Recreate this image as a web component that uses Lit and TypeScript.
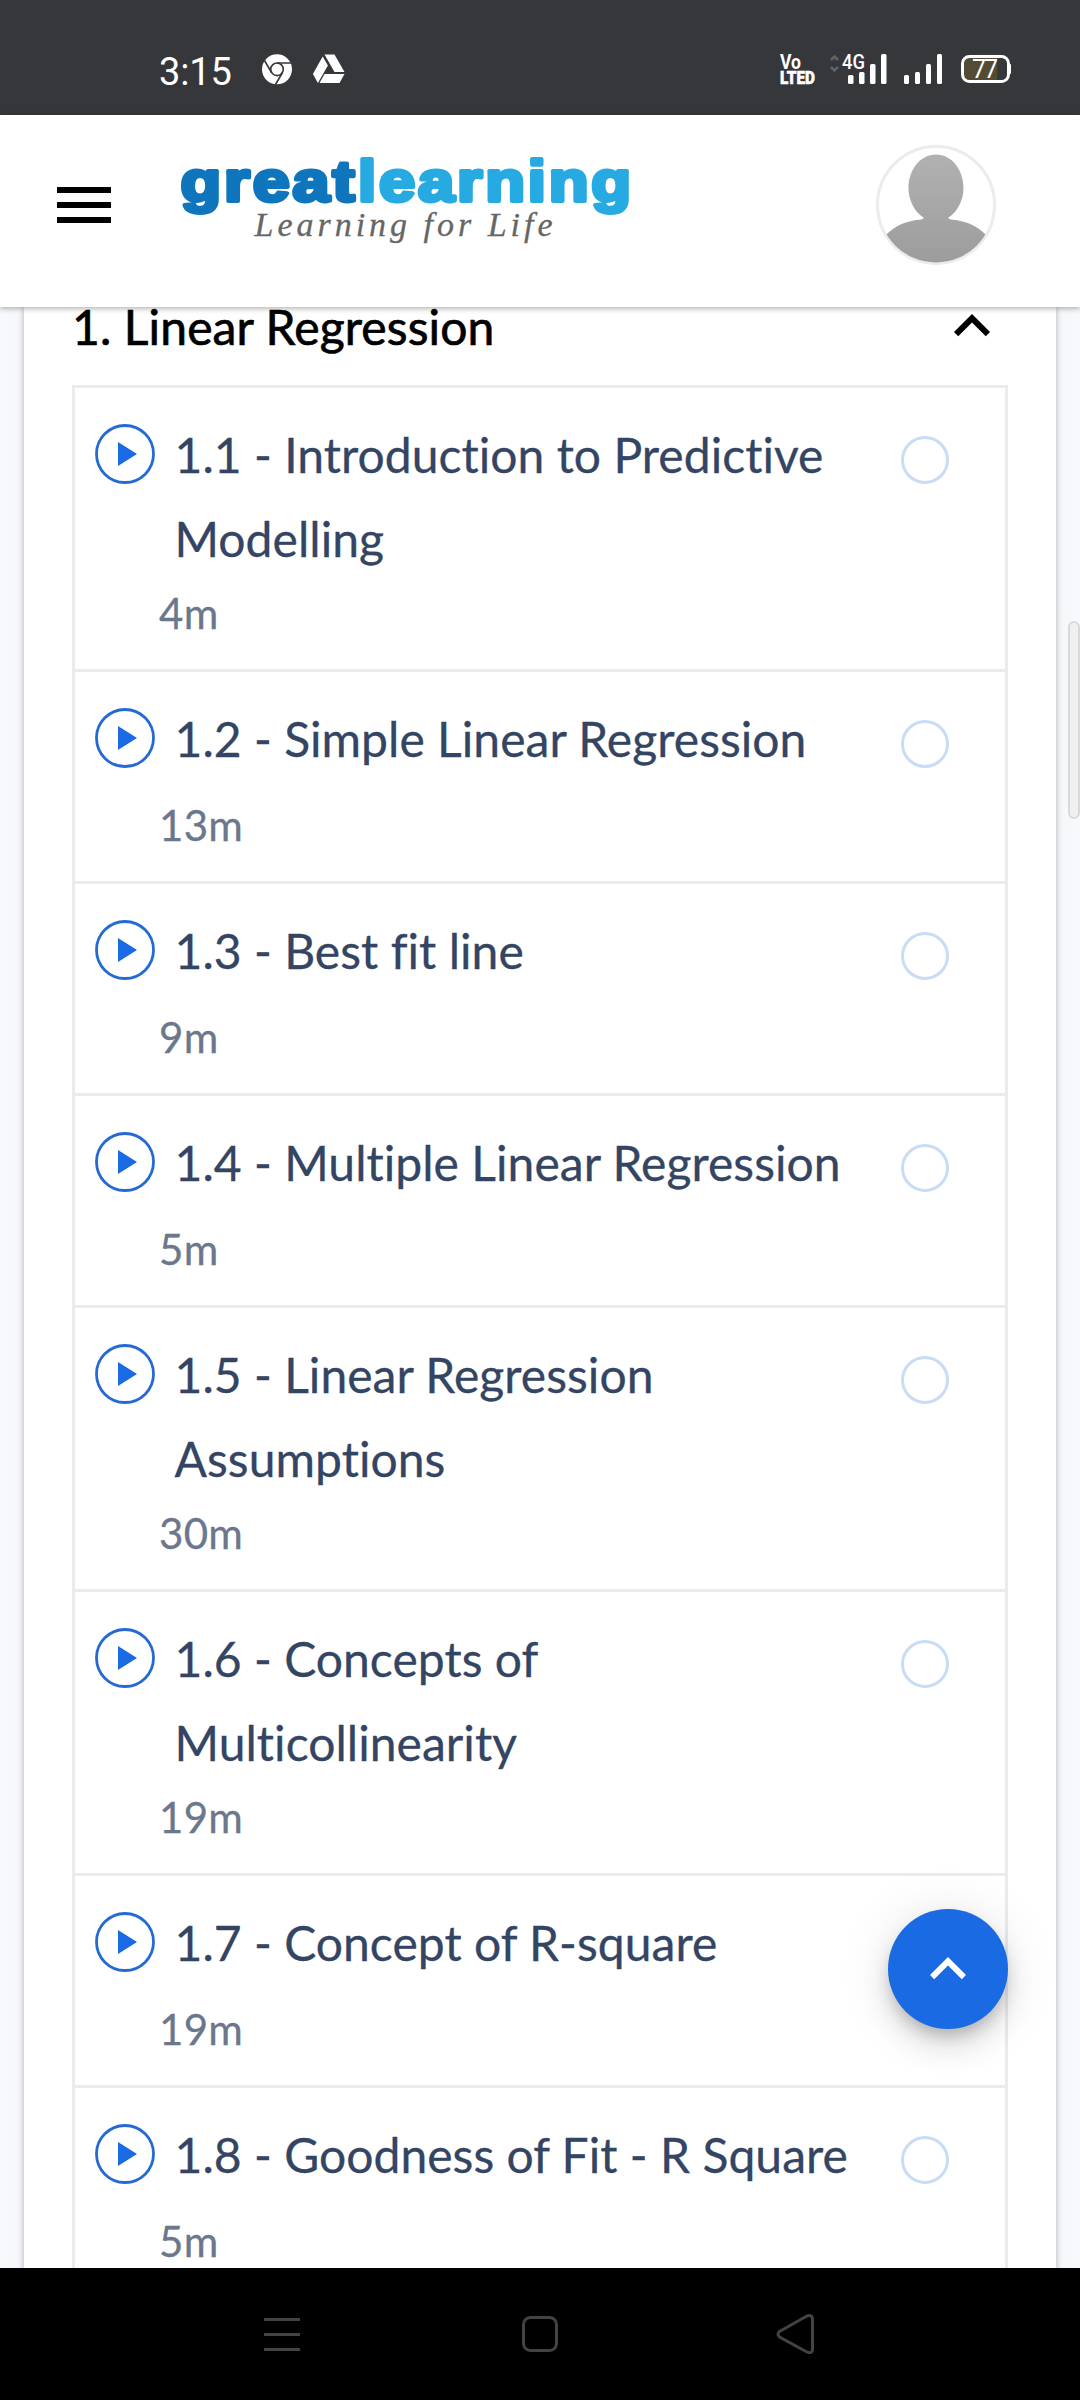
import { LitElement, html, css } from "lit";
import { customElement } from "lit/decorators.js";

interface Lesson {
  title: string;
  time: string;
}

const LESSONS: Lesson[] = [
  { title: "1.1 - Introduction to Predictive Modelling", time: "4m" },
  { title: "1.2 - Simple Linear Regression", time: "13m" },
  { title: "1.3 - Best fit line", time: "9m" },
  { title: "1.4 - Multiple Linear Regression", time: "5m" },
  { title: "1.5 - Linear Regression Assumptions", time: "30m" },
  { title: "1.6 - Concepts of Multicollinearity", time: "19m" },
  { title: "1.7 - Concept of R-square", time: "19m" },
  { title: "1.8 - Goodness of Fit - R Square", time: "5m" },
];

@customElement("status-bar")
class StatusBar extends LitElement {
  static styles = css`
    :host { display: block; height: 115px; background: #36373b; flex: none; }
    svg { display: block; }
    .clock { font: 38px Roboto, sans-serif; letter-spacing: 1.2px; }
    .vo { font: 700 20px Roboto, sans-serif; }
    .lte { font: 900 18px Roboto, sans-serif; stroke: #fff; stroke-width: 0.5; }
    .net { font: 500 21px Roboto, sans-serif; }
    .batt { font: 25px Roboto, sans-serif; }
  `;
  render() {
    return html`<svg width="1080" height="115" viewBox="0 0 1080 115" fill="#fff">
      <text class="clock" x="159" y="84.500" textLength="74">3:15</text>
      <circle cx="277" cy="69.300" r="15" />
      <g fill="none" stroke="#36373b" stroke-width="1.600">
        <circle cx="277" cy="69.300" r="6.300" />
        <path d="M277 63H291M271.500 72.500L264.500 60.500M282.500 72.500L275.500 84.500" />
      </g>
      <path d="M324.500 54.500h10l10 17.500h-10zM322.700 56.500l5.200 9-10 17.500-5-9zM324.500 74h20l-5 9h-20z" />
      <text class="vo" x="780" y="68.500" textLength="21" lengthAdjust="spacingAndGlyphs">Vo</text>
      <text class="lte" x="780" y="84" textLength="35" lengthAdjust="spacingAndGlyphs">LTED</text>
      <path d="M831 60l3.500-3.500 3.500 3.500M831 67l3.500 3.500 3.500-3.500" fill="none" stroke="#616266" stroke-width="2.600" />
      <text class="net" x="842" y="69" textLength="23" lengthAdjust="spacingAndGlyphs">4G</text>
      <g>
        <rect x="848" y="75" width="5.500" height="9" rx="1.500" /><rect x="859" y="72" width="5.500" height="12" rx="1.500" />
        <rect x="870" y="64" width="5.500" height="20" rx="1.500" /><rect x="881" y="54" width="5.500" height="30" rx="1.500" />
        <rect x="904" y="75" width="5" height="9" rx="1.500" /><rect x="915" y="72" width="5" height="12" rx="1.500" />
        <rect x="926" y="64" width="5" height="20" rx="1.500" /><rect x="937" y="54" width="5" height="30" rx="1.500" />
      </g>
      <path d="M968 58h29v22h-29q-4 0-4-5v-12q0-5 4-5z" fill="#544b35" />
      <rect x="962.500" y="56.500" width="46" height="25" rx="7" fill="none" stroke="#fff" stroke-width="3" />
      <rect x="1008" y="64" width="3" height="10" rx="1" />
      <text class="batt" x="972" y="78" textLength="26">77</text>
    </svg>`;
  }
}

@customElement("site-header")
class SiteHeader extends LitElement {
  static styles = css`
    :host {
      display: flex; align-items: flex-start; height: 192px; box-sizing: border-box; flex: none;
      padding: 30px 84px 0 48px; background: #fff; position: relative; z-index: 2;
      box-shadow: 0 2px 5px rgba(0, 0, 0, 0.28);
    }
    .menu { margin-top: 24px; width: 72px; height: 72px; }
    .logo { margin-left: 54px; width: 470px; height: 110px; overflow: visible; }
    .avatar { margin-left: auto; width: 120px; height: 120px; }
    .word { font: 700 58px "Liberation Sans", sans-serif; letter-spacing: 2.5px; stroke-width: 4; stroke-linejoin: round; }
    .great { fill: #0f75bd; stroke: #0f75bd; }
    .learning { fill: #27aae1; stroke: #27aae1; }
    .tagline { font: italic 34px "Liberation Serif", serif; fill: #666; stroke: #666; stroke-width: 0.3; }
  `;
  render() {
    return html`
      <svg class="menu" viewBox="0 0 24 24"><path d="M3 18h18v-2H3v2zm0-5h18v-2H3v2zm0-7v2h18V6H3z" /></svg>
      <svg class="logo" viewBox="174 145 470 110">
        <text class="word great" x="180.500" y="200.500" textLength="177" lengthAdjust="spacingAndGlyphs">great</text>
        <text class="word learning" x="358" y="200.500" textLength="276" lengthAdjust="spacingAndGlyphs">learning</text>
        <text class="tagline" x="254.500" y="236" textLength="298">Learning for Life</text>
      </svg>
      <svg class="avatar" viewBox="0 0 120 120">
        <defs>
          <clipPath id="face"><circle cx="60" cy="60" r="57.500" /></clipPath>
          <linearGradient id="tone" gradientUnits="userSpaceOnUse" x1="0" y1="0" x2="0" y2="120">
            <stop offset="0" stop-color="#b3b3b3" /><stop offset="1" stop-color="#9c9c9c" />
          </linearGradient>
        </defs>
        <circle cx="60" cy="60" r="58.500" fill="#fff" stroke="#ebebf0" stroke-width="3" />
        <path clip-path="url(#face)" fill="url(#tone)"
          d="M60 9.500C76 9.500 87.500 25 87.500 43C87.500 56 81 67 72.500 72.500Q72 74.500 75 74.500C92 76 103 82 112 92V120H8V92C17 82 28 76 45 74.500Q48 74.500 47.500 72.500C39 67 32.500 56 32.500 43C32.500 25 44 9.500 60 9.500Z" />
      </svg>`;
  }
}

@customElement("lesson-row")
class LessonRow extends LitElement {
  static properties = { lesson: { attribute: false } };
  declare lesson: Lesson;
  static styles = css`
    :host { display: flex; align-items: flex-start; padding: 24px 56px 23px 20px; border-bottom: 3px solid #ebebee; }
    .play { width: 60px; height: 60px; margin-top: 12px; flex: none; }
    .body { flex: 1; padding-left: 4px; }
    .title {
      margin-left: 15.5px; padding-top: 1px; min-height: 96px; margin-bottom: -1px; width: 690px; font-size: 48px; line-height: 84px;
      letter-spacing: 0.04px; color: #344563; -webkit-text-stroke: 0.3px #344563;
    }
    .time { height: 66px; line-height: 66px; font-size: 42px; letter-spacing: 0.3px; color: #6b778c; -webkit-text-stroke: 0.3px #6b778c; }
    .check { width: 48px; height: 48px; box-sizing: border-box; border: 3px solid #c9dcf6; border-radius: 50%; margin-top: 24px; flex: none; }
  `;
  render() {
    return html`
      <svg class="play" viewBox="0 0 60 60">
        <circle cx="30" cy="30" r="28.500" fill="none" stroke="#2469d4" stroke-width="2.800" />
        <path d="M23 18v24l19-12z" fill="#1a6ae4" />
      </svg>
      <div class="body">
        <div class="title">${this.lesson.title}</div>
        <div class="time">${this.lesson.time}</div>
      </div>
      <div class="check"></div>`;
  }
}

@customElement("nav-bar")
class NavBar extends LitElement {
  static styles = css`
    :host { display: block; height: 132px; background: #000; flex: none; position: relative; z-index: 3; }
    svg { display: block; }
  `;
  render() {
    return html`<svg width="1080" height="132" viewBox="0 2268 1080 132" fill="none" stroke="#434343" stroke-width="3">
      <path d="M264 2319.500h36M264 2334.500h36M264 2349.500h36" />
      <rect x="523.500" y="2317.500" width="33" height="33" rx="7" />
      <path d="M779.500 2331.500L806 2316.500Q812.500 2313.500 812.500 2320V2348.500Q812.500 2355 806 2351.500L779.500 2337Q776.500 2334.300 779.500 2331.500Z" />
    </svg>`;
  }
}

@customElement("app-root")
export class AppRoot extends LitElement {
  static styles = css`
    :host {
      display: flex; flex-direction: column; width: 1080px; height: 2400px; overflow: hidden; position: relative;
      font-family: Lato, Carlito, sans-serif; font-variant-ligatures: none; background: #f8f9fc;
    }
    .content { flex: 1; min-height: 0; overflow: hidden; padding: 0 24px; display: flex; flex-direction: column; }
    .card { background: #fff; flex: 1 0 auto; padding: 0 48px; box-shadow: 0 0 6px rgba(0, 0, 0, 0.28), 0 0 24px rgba(0, 0, 0, 0.03); }
    .head { display: flex; height: 78px; justify-content: space-between; align-items: flex-start; }
    .heading { font-size: 48px; line-height: 40px; letter-spacing: 0.12px; color: #000; -webkit-text-stroke: 0.7px #000; }
    .chevron { width: 72px; height: 72px; margin-top: -17px; }
    .list { border: 3px solid #ebebee; border-bottom: 0; }
    .thumb {
      position: absolute; left: 1068px; top: 621px; width: 12px; height: 198px; box-sizing: border-box;
      border: 2px solid #d9dad9; border-radius: 6px; background: #f0f0f0; z-index: 2;
    }
    .fab {
      position: absolute; left: 888px; top: 1909px; width: 120px; height: 120px; border-radius: 50%;
      background: #1a6ae4; z-index: 2; display: flex; align-items: center; justify-content: center;
      box-shadow: 0 9px 15px -3px rgba(0, 0, 0, 0.2), 0 18px 30px rgba(0, 0, 0, 0.1), 0 3px 54px rgba(0, 0, 0, 0.1);
    }
    .up { width: 72px; height: 72px; fill: #fff; }
  `;
  render() {
    return html`
      <status-bar></status-bar>
      <site-header></site-header>
      <div class="content">
        <div class="card">
          <div class="head">
            <div class="heading">1. Linear Regression</div>
            <svg class="chevron" viewBox="0 0 24 24"><path d="M12 8l-6 6 1.410 1.410L12 10.830l4.590 4.580L18 14z" /></svg>
          </div>
          <div class="list">${LESSONS.map((l) => html`<lesson-row .lesson=${l}></lesson-row>`)}</div>
        </div>
      </div>
      <nav-bar></nav-bar>
      <div class="thumb"></div>
      <div class="fab"><svg class="up" viewBox="0 0 24 24"><path d="M12 8l-6 6 1.410 1.410L12 10.830l4.590 4.580L18 14z" /></svg></div>`;
  }
}
